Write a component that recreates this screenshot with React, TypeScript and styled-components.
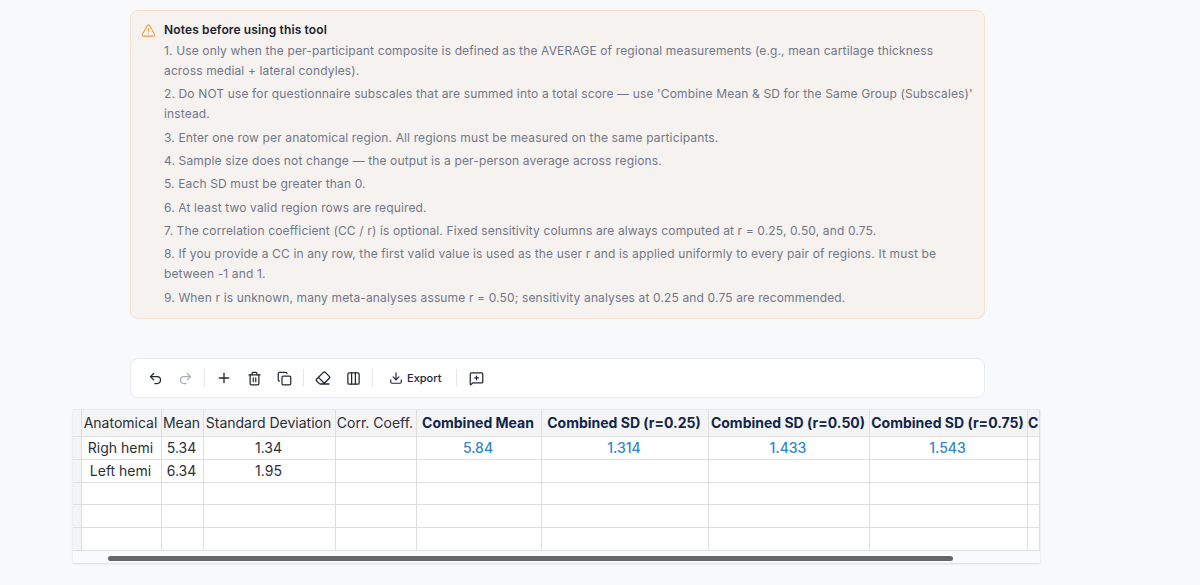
import React from "react";
import styled, { createGlobalStyle } from "styled-components";
import {
  Columns3,
  Copy,
  Download,
  Eraser,
  MessageSquarePlus,
  Plus,
  Redo2,
  Trash2,
  TriangleAlert,
  Undo2,
} from "lucide-react";

const GlobalStyle = createGlobalStyle`
  html, body {
    margin: 0;
    padding: 0;
    background: #f8f9fb;
    font-family: Inter, "Liberation Sans", sans-serif;
  }
`;

const Page = styled.div`
  width: 1200px;
  height: 585px;
  overflow: hidden;
  box-sizing: border-box;
  padding: 10px 0 0 73px;
`;

const Content = styled.div`
  width: 855px;
  margin-left: 57px;
`;

const NoteBox = styled.section`
  box-sizing: border-box;
  height: 309px;
  display: flex;
  gap: 8px;
  padding: 11px 11px 0 10px;
  background: #f6f2ef;
  border: 1px solid #f8e2cf;
  border-radius: 8px;
`;

const NoteIcon = styled.div`
  flex: none;
  width: 15px;
  height: 15px;
  color: #ee9f3e;
`;

const NoteBody = styled.div`
  width: 811px;
`;

const NoteTitle = styled.div`
  font-size: 12px;
  letter-spacing: 0.13px;
  line-height: 16px;
  font-weight: 600;
  color: #1b2230;
  margin-bottom: 3px;
`;

const NoteItem = styled.p`
  margin: 0 0 3.35px;
  font-size: 12px;
  letter-spacing: 0.14px;
  line-height: 20px;
  color: #71778a;
`;

const Toolbar = styled.div`
  box-sizing: border-box;
  height: 40px;
  margin-top: 39px;
  display: flex;
  align-items: center;
  padding: 0 9px;
  background: #ffffff;
  border: 1px solid #e8eaef;
  border-radius: 8px;
`;

const ToolButton = styled.button<{ $muted?: boolean }>`
  flex: none;
  width: 30px;
  height: 30px;
  padding: 0;
  display: flex;
  align-items: center;
  justify-content: center;
  background: none;
  border: none;
  color: ${(p) => (p.$muted ? "#a9aeb8" : "#222833")};
`;

const ExportButton = styled.button`
  flex: none;
  width: 75px;
  height: 30px;
  padding: 0 0 0 12px;
  display: flex;
  align-items: center;
  gap: 4px;
  background: none;
  border: none;
  font-family: inherit;
  font-size: 11px;
  font-weight: 500;
  color: #222833;
`;

const Separator = styled.span`
  flex: none;
  width: 1px;
  height: 18px;
  margin: 0 4px;
  background: #e5e7eb;
`;

const Sheet = styled.div`
  width: 967px;
  height: 154px;
  margin-top: 11px;
  background: #f9fafb;
  box-shadow: 0 1px 2px rgba(0, 0, 0, 0.12);
  overflow: hidden;
`;

const Table = styled.table`
  table-layout: fixed;
  border-collapse: separate;
  border-spacing: 0;
  width: 967px;
`;

const HeadCell = styled.th<{ $bold?: boolean }>`
  box-sizing: border-box;
  height: 28px;
  padding: 0 2px 2px 0;
  overflow: hidden;
  white-space: nowrap;
  text-align: center;
  background: #f4f4f5;
  border-right: 1px solid #dedede;
  border-bottom: 1px solid #dedede;
  border-top: 1px solid #ececec;
  font-size: 14px;
  font-weight: ${(p) => (p.$bold ? 700 : 400)};
  color: ${(p) => (p.$bold ? "#10264a" : "#2a2f38")};
`;

const Cell = styled.td<{ $result?: boolean; $short?: boolean }>`
  box-sizing: border-box;
  height: ${(p) => (p.$short ? "22px" : "23px")};
  padding: 0 2px 2px 0;
  overflow: hidden;
  white-space: nowrap;
  text-align: center;
  background: #ffffff;
  border-right: 1px solid #dedede;
  border-bottom: 1px solid #dedede;
  font-size: 14px;
  font-weight: ${(p) => (p.$result ? 500 : 400)};
  color: ${(p) => (p.$result ? "#2f86cf" : "#2a2f38")};
`;

const RowHead = styled.td`
  box-sizing: border-box;
  padding: 0;
  background: #f4f4f5;
  border-right: 1px solid #dedede;
  border-bottom: 1px solid #dedede;
`;

const ScrollTrack = styled.div`
  height: 13px;
  padding: 5px 0 0 35px;
  box-sizing: border-box;
`;

const ScrollThumb = styled.div`
  width: 845px;
  height: 5px;
  border-radius: 3px;
  background: #63666b;
`;

const colWidths = [9, 80, 42, 132, 81, 125, 167, 161, 158, 12];

const headers = [
  { label: "Anatomical" },
  { label: "Mean" },
  { label: "Standard Deviation" },
  { label: "Corr. Coeff." },
  { label: "Combined Mean", bold: true },
  { label: "Combined SD (r=0.25)", bold: true },
  { label: "Combined SD (r=0.50)", bold: true },
  { label: "Combined SD (r=0.75)", bold: true },
  { label: "C", bold: true },
];

const rows = [
  ["Righ hemi", "5.34", "1.34", "", "5.84", "1.314", "1.433", "1.543", ""],
  ["Left hemi", "6.34", "1.95", "", "", "", "", "", ""],
  ["", "", "", "", "", "", "", "", ""],
  ["", "", "", "", "", "", "", "", ""],
  ["", "", "", "", "", "", "", "", ""],
];

const notes = [
  "1. Use only when the per-participant composite is defined as the AVERAGE of regional measurements (e.g., mean cartilage thickness across medial + lateral condyles).",
  "2. Do NOT use for questionnaire subscales that are summed into a total score — use 'Combine Mean & SD for the Same Group (Subscales)' instead.",
  "3. Enter one row per anatomical region. All regions must be measured on the same participants.",
  "4. Sample size does not change — the output is a per-person average across regions.",
  "5. Each SD must be greater than 0.",
  "6. At least two valid region rows are required.",
  "7. The correlation coefficient (CC / r) is optional. Fixed sensitivity columns are always computed at r = 0.25, 0.50, and 0.75.",
  "8. If you provide a CC in any row, the first valid value is used as the user r and is applied uniformly to every pair of regions. It must be between -1 and 1.",
  "9. When r is unknown, many meta-analyses assume r = 0.50; sensitivity analyses at 0.25 and 0.75 are recommended.",
];

export default function App() {
  return (
    <Page>
      <GlobalStyle />
      <Content>
        <NoteBox>
          <NoteIcon>
            <TriangleAlert size={15} strokeWidth={1.75} />
          </NoteIcon>
          <NoteBody>
            <NoteTitle>Notes before using this tool</NoteTitle>
            {notes.map((n) => (
              <NoteItem key={n}>{n}</NoteItem>
            ))}
          </NoteBody>
        </NoteBox>
        <Toolbar>
          <ToolButton><Undo2 size={15} strokeWidth={2} /></ToolButton>
          <ToolButton $muted><Redo2 size={15} strokeWidth={2} /></ToolButton>
          <Separator />
          <ToolButton><Plus size={16} strokeWidth={2} /></ToolButton>
          <ToolButton><Trash2 size={15} strokeWidth={2} /></ToolButton>
          <ToolButton><Copy size={15} strokeWidth={2} /></ToolButton>
          <Separator />
          <ToolButton><Eraser size={16} strokeWidth={2} /></ToolButton>
          <ToolButton><Columns3 size={15} strokeWidth={2} /></ToolButton>
          <Separator />
          <ExportButton>
            <Download size={14} strokeWidth={2} />
            Export
          </ExportButton>
          <Separator />
          <ToolButton><MessageSquarePlus size={15} strokeWidth={2} /></ToolButton>
        </Toolbar>
      </Content>
      <Sheet>
        <Table>
          <colgroup>
            {colWidths.map((w, i) => (
              <col key={i} width={w} />
            ))}
          </colgroup>
          <thead>
            <tr>
              <HeadCell />
              {headers.map((h) => (
                <HeadCell key={h.label} $bold={h.bold}>
                  {h.label}
                </HeadCell>
              ))}
            </tr>
          </thead>
          <tbody>
            {rows.map((r, i) => (
              <tr key={i}>
                <RowHead />
                {r.map((v, j) => (
                  <Cell key={j} $result={j >= 4} $short={i === 2}>
                    {v}
                  </Cell>
                ))}
              </tr>
            ))}
          </tbody>
        </Table>
        <ScrollTrack>
          <ScrollThumb />
        </ScrollTrack>
      </Sheet>
    </Page>
  );
}
